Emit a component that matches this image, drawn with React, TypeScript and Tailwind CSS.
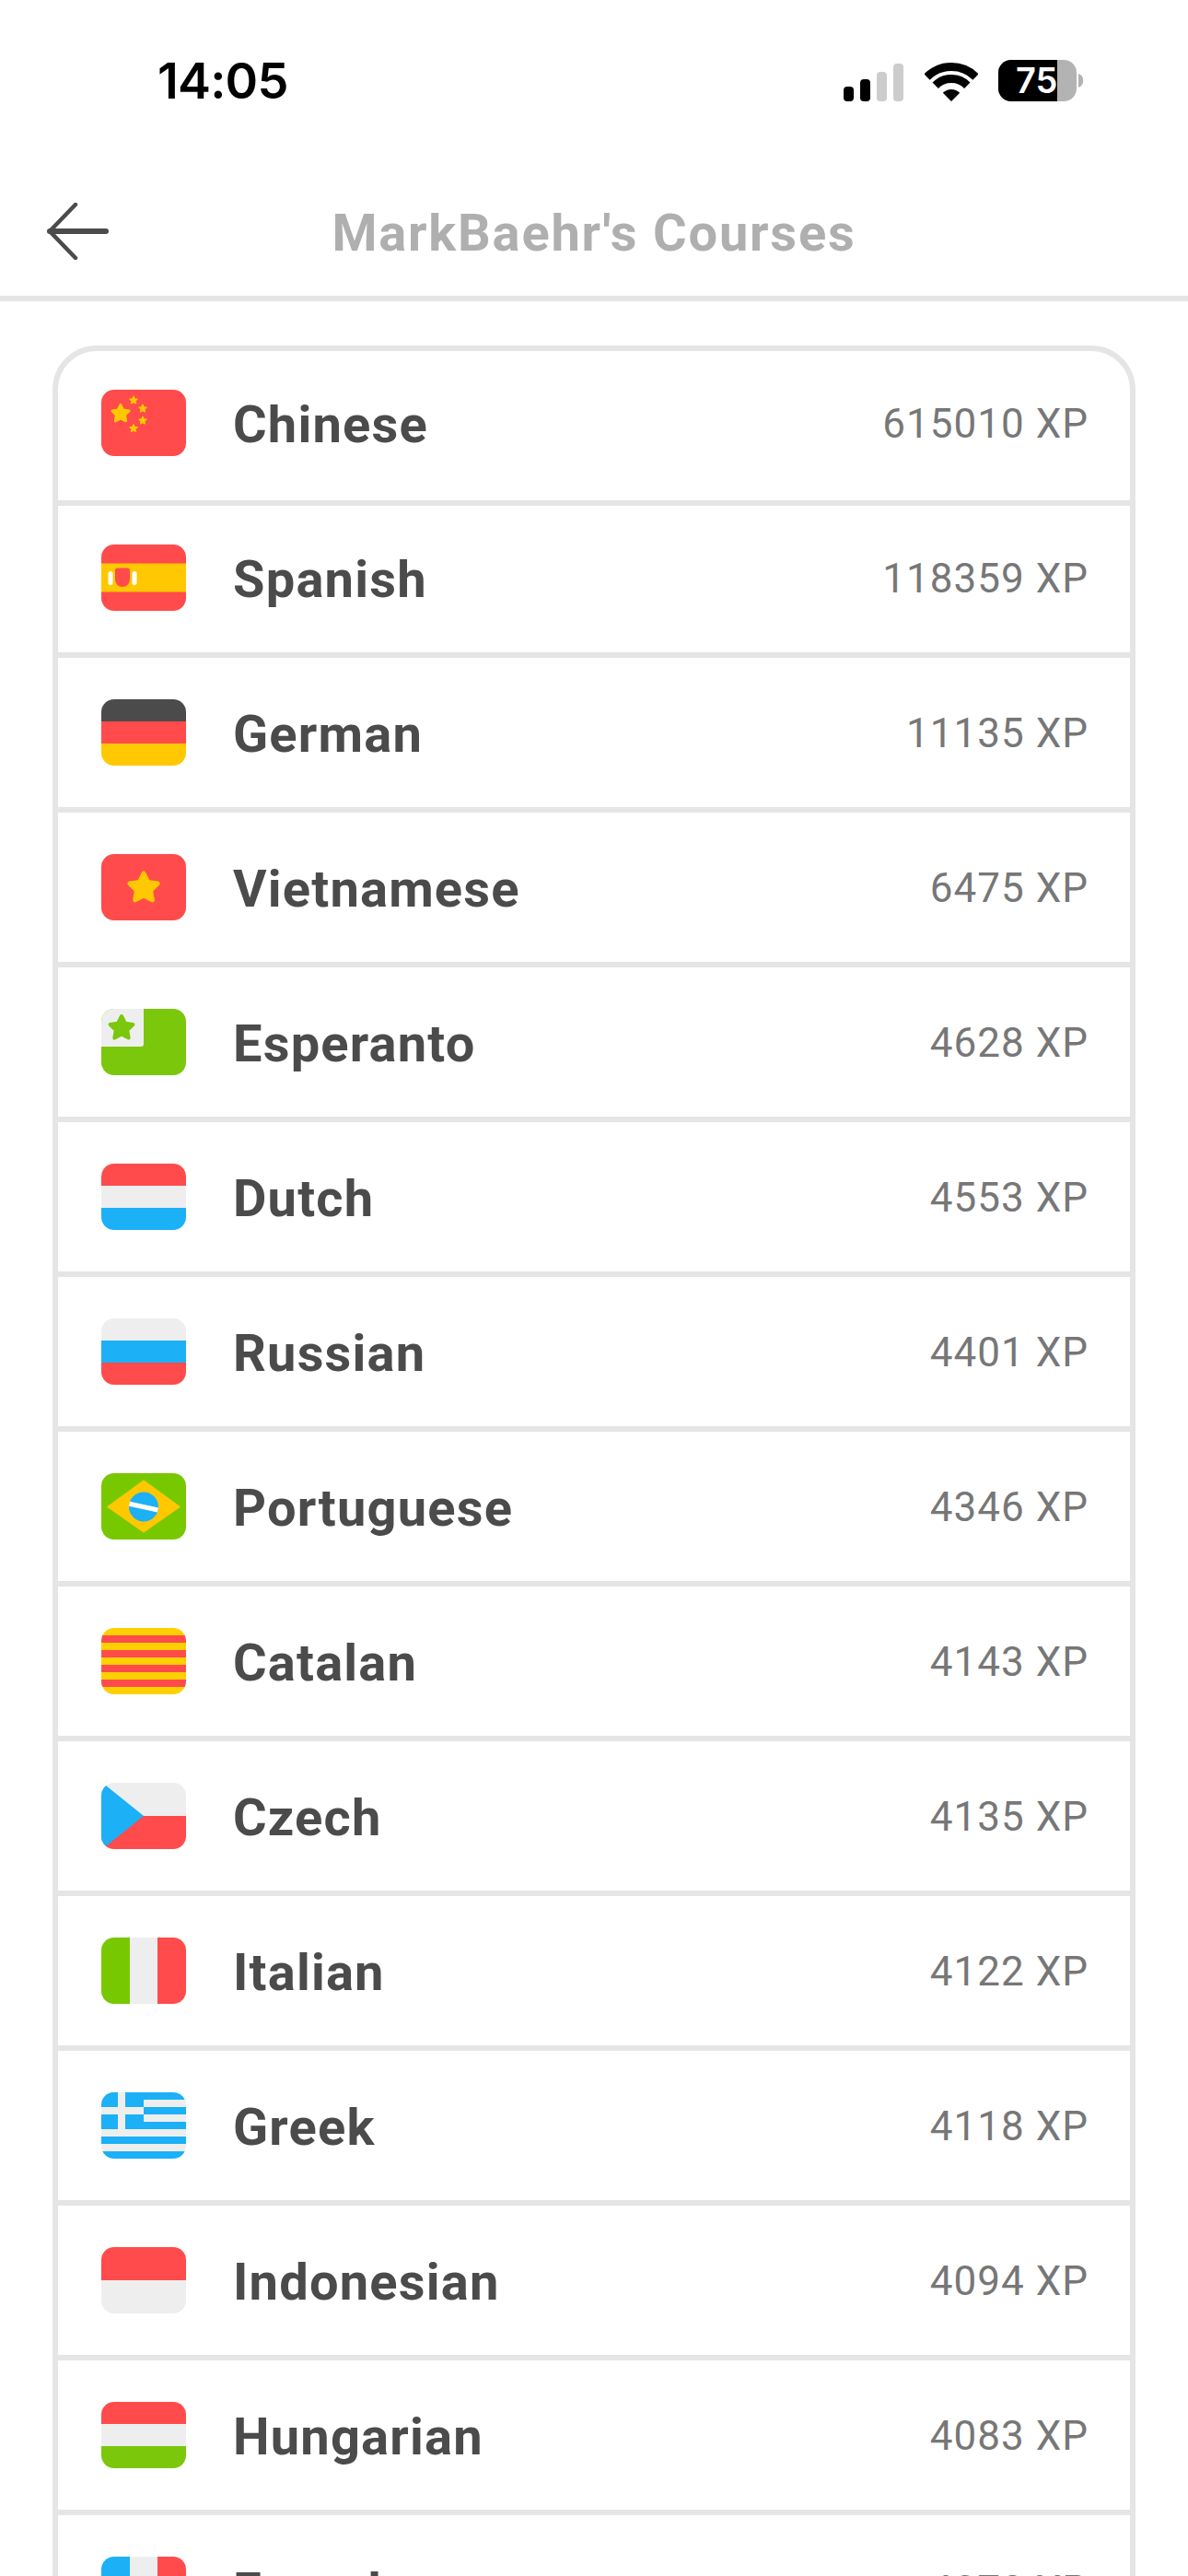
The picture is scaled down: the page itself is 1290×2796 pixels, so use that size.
import React from 'react';

const RED = '#ff4b4b';
const YELLOW = '#ffc800';
const GREEN = '#7ac70c';
const BLUE = '#1cb0f6';
const WHITE = '#eeeeee';
const DARK = '#4b4b4b';

// five point star, corners get rounded by the stroke
function Star({ cx, cy, r, fill }: { cx: number; cy: number; r: number; fill: string }) {
    const pts: string[] = [];
    for (let i = 0; i < 10; i++) {
        const radius = i % 2 === 0 ? r * 0.84 : r * 0.42;
        const angle = -Math.PI / 2 + (i * Math.PI) / 5;
        pts.push(`${cx + radius * Math.cos(angle)},${cy + radius * Math.sin(angle)}`);
    }
    return <polygon points={pts.join(' ')} fill={fill} stroke={fill} strokeWidth={r * 0.26} strokeLinejoin="round" />;
}

function HStripes({ colors }: { colors: string[] }) {
    const h = 72 / colors.length;
    return (
        <>
            {colors.map((c, i) => (
                <rect key={i} x={0} y={i * h} width={92} height={h} fill={c} />
            ))}
        </>
    );
}

function VStripes({ colors }: { colors: string[] }) {
    return (
        <>
            <rect x={0} y={0} width={31} height={72} fill={colors[0]} />
            <rect x={31} y={0} width={30} height={72} fill={colors[1]} />
            <rect x={61} y={0} width={31} height={72} fill={colors[2]} />
        </>
    );
}

const flags: Record<string, React.ReactNode> = {
    china: (
        <>
            <rect width={92} height={72} fill={RED} />
            <Star cx={21} cy={26} r={11.5} fill={YELLOW} />
            <Star cx={35} cy={11.5} r={5} fill={YELLOW} />
            <Star cx={45} cy={20.5} r={5} fill={YELLOW} />
            <Star cx={45} cy={33.5} r={5} fill={YELLOW} />
            <Star cx={35} cy={42} r={5} fill={YELLOW} />
        </>
    ),
    spain: (
        <>
            <rect width={92} height={72} fill={RED} />
            <rect y={20.5} width={92} height={31} fill={YELLOW} />
            <path d="M15 28a2.5 2.5 0 0 1 2.5-2.5h11a2.5 2.5 0 0 1 2.5 2.5v10a8 8 0 0 1-16 0z" fill={RED} />
            <rect x={7.5} y={29} width={5} height={15} rx={2.5} fill="#fff" />
            <rect x={33.5} y={29} width={5} height={15} rx={2.5} fill="#fff" />
        </>
    ),
    germany: <HStripes colors={[DARK, RED, YELLOW]} />,
    vietnam: (
        <>
            <rect width={92} height={72} fill={RED} />
            <Star cx={46} cy={37} r={19} fill={YELLOW} />
        </>
    ),
    esperanto: (
        <>
            <rect width={92} height={72} fill={GREEN} />
            <path d="M0 0h46v38a3 3 0 0 1-3 3H0z" fill={WHITE} />
            <Star cx={22} cy={21} r={15.5} fill={GREEN} />
        </>
    ),
    dutch: <HStripes colors={[RED, WHITE, BLUE]} />,
    russia: <HStripes colors={[WHITE, BLUE, RED]} />,
    brazil: (
        <>
            <rect width={92} height={72} fill="#78c800" />
            <polygon points="46,8.5 84.5,36.5 46,63.5 7.5,36.5" fill={YELLOW} stroke={YELLOW} strokeWidth={2} strokeLinejoin="round" />
            <circle cx={46} cy={36.5} r={16} fill={BLUE} />
            <path d="M30.5 33.2 61.5 40" stroke="#fff" strokeWidth={5} />
        </>
    ),
    catalan: <HStripes colors={['#ffd000', RED, '#ffd000', RED, '#ffd000', RED, '#ffd000', RED, '#ffd000']} />,
    czech: (
        <>
            <HStripes colors={[WHITE, RED]} />
            <polygon points="0,-1 46,36 0,73" fill={BLUE} />
        </>
    ),
    italy: <VStripes colors={['#78c800', WHITE, RED]} />,
    greece: (
        <>
            <HStripes colors={[BLUE, WHITE, BLUE, WHITE, BLUE, WHITE, BLUE, WHITE, BLUE]} />
            <rect width={46} height={40} fill={BLUE} />
            <rect x={18} width={8} height={40} fill={WHITE} />
            <rect y={16} width={46} height={8} fill={WHITE} />
        </>
    ),
    indonesia: <HStripes colors={[RED, WHITE]} />,
    hungary: <HStripes colors={[RED, WHITE, GREEN]} />,
    france: <VStripes colors={[BLUE, WHITE, RED]} />,
};

const courses = [
    { name: 'Chinese', xp: 615010, flag: 'china' },
    { name: 'Spanish', xp: 118359, flag: 'spain' },
    { name: 'German', xp: 11135, flag: 'germany' },
    { name: 'Vietnamese', xp: 6475, flag: 'vietnam' },
    { name: 'Esperanto', xp: 4628, flag: 'esperanto' },
    { name: 'Dutch', xp: 4553, flag: 'dutch' },
    { name: 'Russian', xp: 4401, flag: 'russia' },
    { name: 'Portuguese', xp: 4346, flag: 'brazil' },
    { name: 'Catalan', xp: 4143, flag: 'catalan' },
    { name: 'Czech', xp: 4135, flag: 'czech' },
    { name: 'Italian', xp: 4122, flag: 'italy' },
    { name: 'Greek', xp: 4118, flag: 'greece' },
    { name: 'Indonesian', xp: 4094, flag: 'indonesia' },
    { name: 'Hungarian', xp: 4083, flag: 'hungary' },
    { name: 'French', xp: 4078, flag: 'france' },
];

// the top two rows sit a little tighter than the rest of the list
const rowSizes = ['h-[168px] pb-[6px]', 'h-[165px] pb-[3px]'];

function StatusIcons() {
    return (
        <div className="flex items-center">
            <div className="flex items-end gap-[7px] h-[41px] mt-[5px]">
                <div className="w-[11px] h-[16px] rounded-[4px] bg-black" />
                <div className="w-[11px] h-[24px] rounded-[4px] bg-black" />
                <div className="w-[11px] h-[32px] rounded-[4px] bg-[#cccccc]" />
                <div className="w-[11px] h-[41px] rounded-[4px] bg-[#cccccc]" />
            </div>
            <svg className="ml-[23px] mt-[4px]" width="58" height="42" viewBox="0 0 58 42" fill="none">
                <path d="M2.5 15.5A37.5 37.5 0 0 1 55.5 15.5" stroke="#000" strokeWidth="9" />
                <path d="M11.7 24.7A24.5 24.5 0 0 1 46.3 24.7" stroke="#000" strokeWidth="9" />
                <path d="M29 42 19.8 32.8A13 13 0 0 1 38.2 32.8Z" fill="#000" />
            </svg>
            <svg className="ml-[22px]" width="93" height="45" viewBox="0 0 93 45">
                <rect width="85" height="45" rx="14" fill="#b3b3b3" />
                <path d="M14 0h50v45H14A14 14 0 0 1 0 31V14A14 14 0 0 1 14 0Z" fill="#000" />
                <path d="M87 15a8 8 0 0 1 0 15z" fill="#b3b3b3" />
                <text x="19" y="36" fill="#fff" fontSize="38" fontWeight="600" fontFamily="Inter, sans-serif">75</text>
            </svg>
        </div>
    );
}

export default function App() {
    return (
        <div className="h-[2796px] overflow-hidden bg-white font-['Roboto',sans-serif]">
            {/* status bar */}
            <div className="h-[181px] flex justify-between items-start pt-[64px] pl-[171px] pr-[113px]">
                <span className="mt-[1px] text-[54px] leading-[46px] font-semibold text-black font-['Inter',sans-serif] tracking-[-0.8px]">14:05</span>
                <StatusIcons />
            </div>

            {/* nav bar */}
            <div className="h-[146px] border-b-[6px] border-[#e5e5e5] grid grid-cols-[1fr_auto_1fr] items-center">
                <svg className="ml-[51px]" width="67" height="62" viewBox="0 0 67 62" fill="none">
                    <path d="M31 2 3 31 31 60" stroke={DARK} strokeWidth="4.5" strokeLinecap="round" strokeLinejoin="round" />
                    <path d="M3 31H64" stroke={DARK} strokeWidth="6" strokeLinecap="round" />
                </svg>
                <h1 className="mt-[3px] text-[56px] leading-none font-bold text-[#afafaf] tracking-[1.8px]">MarkBaehr's Courses</h1>
                <div />
            </div>

            {/* course list */}
            <div className="mt-[48px] mx-[57px] border-[6px] border-[#e5e5e5] rounded-[48px]">
                {courses.map((course, i) => (
                    <div
                        key={course.name}
                        className={`${rowSizes[i] ?? 'h-[168px]'} border-b-[6px] border-[#e5e5e5] flex items-center pl-[47px] pr-[45px]`}
                    >
                        <div className="w-[92px] h-[72px] rounded-[14px] overflow-hidden">
                            <svg className="block" width="92" height="72" viewBox="0 0 92 72">
                                {flags[course.flag]}
                            </svg>
                        </div>
                        <span className="ml-[51px] mt-[3px] flex-1 text-[56px] leading-none font-bold text-[#4b4b4b] tracking-[1.2px]">{course.name}</span>
                        <span className="mt-[1px] text-[44px] leading-none text-[#777777] tracking-[1px]">{course.xp} XP</span>
                    </div>
                ))}
            </div>
        </div>
    );
}
